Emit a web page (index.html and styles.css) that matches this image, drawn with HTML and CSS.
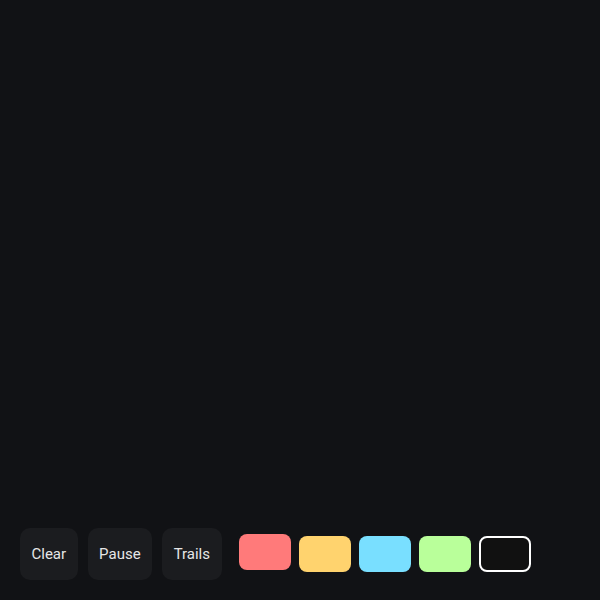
FILE: index.html
```html
<!DOCTYPE html>
<html lang="en">
<head>
  <meta charset="UTF-8">
  <meta name="viewport" content="width=device-width, initial-scale=1.0">
  <title>Particles</title>
  <link rel="stylesheet" href="styles.css">
</head>
<body>
  <div class="stage"></div>

  <!-- Controls -->
  <div class="toolbar">
    <button class="tool-btn">Clear</button>
    <button class="tool-btn">Pause</button>
    <button class="tool-btn">Trails</button>

    <div class="swatches">
      <button class="swatch active" style="background-color: #ff7a7a"></button>
      <button class="swatch" style="background-color: #ffd36e"></button>
      <button class="swatch" style="background-color: #79dfff"></button>
      <button class="swatch" style="background-color: #b9ff9a"></button>
      <button class="swatch swatch-dark"></button>
    </div>
  </div>
</body>
</html>
```

FILE: styles.css
```css
html, body {
  height: 100%;
}

body {
  font-family: Roboto, "Liberation Sans", sans-serif;
  background-color: #111215;
  color: #e6e6e6;
  margin: 0;
  padding: 0;
  display: flex;
  flex-direction: column;
}

.stage {
  flex: 1;
}

.toolbar {
  display: flex;
  align-items: center;
  gap: 10px;
  padding: 0 20px 20px 20px;
}

.tool-btn {
  font-family: inherit;
  font-size: 15px;
  line-height: 20px;
  color: #e6e6e6;
  background-color: #1b1c1f;
  border: none;
  border-radius: 10px;
  padding: 16px 11.5px;
  cursor: pointer;
}

.tool-btn:hover {
  background-color: #232428;
}

.swatches {
  display: flex;
  align-items: center;
  gap: 8px;
  margin-left: 7px;
}

.swatch {
  width: 52px;
  height: 36px;
  border: none;
  border-radius: 8px;
  padding: 0;
  cursor: pointer;
}

.swatch.active {
  transform: translateY(-2px);
}

.swatch-dark {
  background-color: #111111;
  border: 2px solid #ffffff;
}
```
